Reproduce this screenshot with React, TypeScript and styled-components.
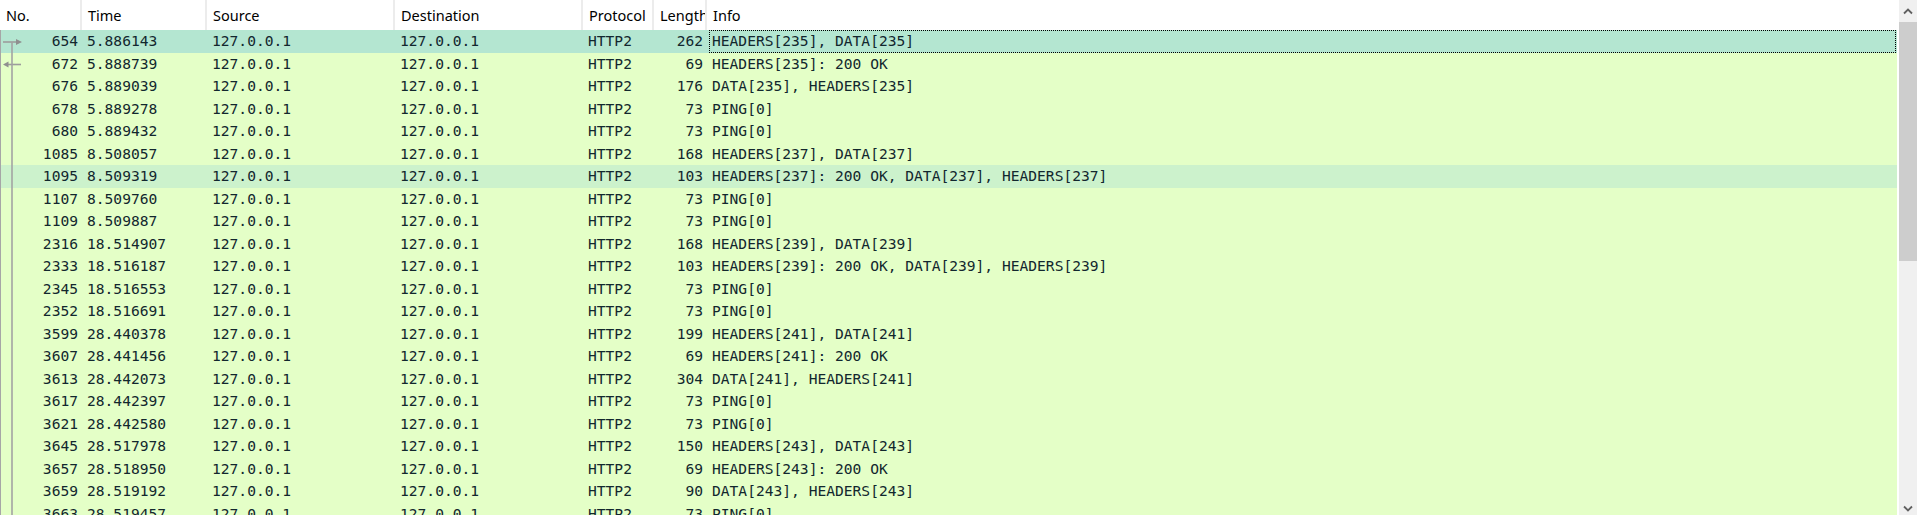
import styled, { createGlobalStyle } from 'styled-components'

type Related = 'request' | 'response' | 'line'
type RowKind = 'selected' | 'related' | 'normal'

type Packet = {
  no: number
  time: string
  len: number
  info: string
  related: Related
  kind: RowKind
}

const rawPackets: [number, string, number, string][] = [
  [654, '5.886143', 262, 'HEADERS[235], DATA[235]'],
  [672, '5.888739', 69, 'HEADERS[235]: 200 OK'],
  [676, '5.889039', 176, 'DATA[235], HEADERS[235]'],
  [678, '5.889278', 73, 'PING[0]'],
  [680, '5.889432', 73, 'PING[0]'],
  [1085, '8.508057', 168, 'HEADERS[237], DATA[237]'],
  [1095, '8.509319', 103, 'HEADERS[237]: 200 OK, DATA[237], HEADERS[237]'],
  [1107, '8.509760', 73, 'PING[0]'],
  [1109, '8.509887', 73, 'PING[0]'],
  [2316, '18.514907', 168, 'HEADERS[239], DATA[239]'],
  [2333, '18.516187', 103, 'HEADERS[239]: 200 OK, DATA[239], HEADERS[239]'],
  [2345, '18.516553', 73, 'PING[0]'],
  [2352, '18.516691', 73, 'PING[0]'],
  [3599, '28.440378', 199, 'HEADERS[241], DATA[241]'],
  [3607, '28.441456', 69, 'HEADERS[241]: 200 OK'],
  [3613, '28.442073', 304, 'DATA[241], HEADERS[241]'],
  [3617, '28.442397', 73, 'PING[0]'],
  [3621, '28.442580', 73, 'PING[0]'],
  [3645, '28.517978', 150, 'HEADERS[243], DATA[243]'],
  [3657, '28.518950', 69, 'HEADERS[243]: 200 OK'],
  [3659, '28.519192', 90, 'DATA[243], HEADERS[243]'],
  [3663, '28.519457', 73, 'PING[0]'],
]

const packets: Packet[] = rawPackets.map(([no, time, len, info], i) => ({
  no,
  time,
  len,
  info,
  related: i === 0 ? 'request' : i === 1 ? 'response' : 'line',
  kind: i === 0 ? 'selected' : no === 1095 ? 'related' : 'normal',
}))

const headers = ['No.', 'Time', 'Source', 'Destination', 'Protocol', 'Length', 'Info']

const HEADER_GRID = '82px 125px 188px 188px 71px 53px 1fr'
// the body has a 1px left border, so its first column is one pixel narrower
const BODY_GRID = '81px 125px 188px 188px 71px 53px 1fr'

const rowBg: Record<RowKind, string> = {
  selected: '#b4e6d1',
  related: '#ccf2cc',
  normal: '#e4ffc7',
}

const GlobalStyle = createGlobalStyle`
  html, body {
    margin: 0;
    padding: 0;
    background: #ffffff;
    overflow: hidden;
  }
  #root {
    height: 515px;
  }
`

const Window = styled.div`
  display: flex;
  height: 515px;
  background: #ffffff;
`

const PacketList = styled.div`
  flex: 1;
  display: flex;
  flex-direction: column;
  min-width: 0;
  overflow: hidden;
`

const HeaderRow = styled.div`
  display: grid;
  grid-template-columns: ${HEADER_GRID};
  height: 30px;
  flex-shrink: 0;
  background: #ffffff;
`

const HeaderCell = styled.div<{ $last?: boolean }>`
  box-sizing: border-box;
  display: flex;
  align-items: center;
  padding: 0 8px 1px 6px;
  overflow: hidden;
  white-space: nowrap;
  font-family: 'Noto Sans', 'Open Sans', sans-serif;
  font-size: 14.5px;
  color: #000000;
  border-right: ${(p) => (p.$last ? 'none' : '2px solid #ececec')};
`

const Body = styled.div`
  flex: 1;
  border-left: 1px solid #a6a6a6;
  background: #e4ffc7;
  overflow: hidden;
`

const Row = styled.div<{ $kind: RowKind }>`
  display: grid;
  grid-template-columns: ${BODY_GRID};
  height: 22.5px;
  background: ${(p) => rowBg[p.$kind]};
  font-family: 'DejaVu Sans Mono', 'Liberation Mono', monospace;
  font-size: 14.6px;
  color: #12272e;
`

const Cell = styled.div<{ $align?: 'left' | 'right'; $focus?: boolean }>`
  box-sizing: border-box;
  display: flex;
  align-items: center;
  justify-content: ${(p) => (p.$align === 'right' ? 'flex-end' : 'flex-start')};
  padding: 0 3px 1px ${(p) => (p.$focus ? '2px' : '4px')};
  overflow: hidden;
  white-space: nowrap;
  border: 1px ${(p) => (p.$focus ? 'dotted #000000' : 'solid transparent')};
  margin-left: ${(p) => (p.$focus ? '2px' : '0')};
  margin-right: ${(p) => (p.$focus ? '1px' : '0')};
`

const NoCell = styled.div`
  display: flex;
  align-items: center;
  justify-content: space-between;
  padding: 0 4px 1px 0;
  overflow: hidden;
`

const RelatedIcon = styled.svg`
  flex-shrink: 0;
  display: block;
  align-self: stretch;
`

const ScrollBar = styled.div`
  width: 18px;
  margin-left: 2px;
  display: flex;
  flex-direction: column;
  background: #f0f0f0;
`

const ScrollButton = styled.div<{ $down?: boolean }>`
  height: 22px;
  flex-shrink: 0;
  display: flex;
  justify-content: center;
  align-items: ${(p) => (p.$down ? 'flex-end' : 'center')};
  padding-bottom: ${(p) => (p.$down ? '3px' : '0')};
  box-sizing: border-box;
`

const Thumb = styled.div`
  height: 239px;
  flex-shrink: 0;
  background: #cdcdcd;
`

const Track = styled.div`
  flex: 1;
`

const RelatedMark = ({ kind }: { kind: Related }) => (
  <RelatedIcon width="23" height="23" viewBox="0 0 23 23" preserveAspectRatio="none">
    {kind === 'request' && (
      <>
        <line x1="2" y1="12" x2="17" y2="12" stroke="#9c9c9c" strokeWidth="1.6" />
        <path d="M15 9 L21 12 L15 15 Z" fill="#8f8f8f" />
        <line x1="11" y1="12" x2="11" y2="23" stroke="#a3a3a3" strokeWidth="1.6" />
      </>
    )}
    {kind === 'response' && (
      <>
        <line x1="5" y1="11.5" x2="20" y2="11.5" stroke="#9c9c9c" strokeWidth="1.6" />
        <path d="M7.5 8.5 L2 11.5 L7.5 14.5 Z" fill="#8f8f8f" />
        <line x1="11" y1="0" x2="11" y2="23" stroke="#a3a3a3" strokeWidth="1.6" />
      </>
    )}
    {kind === 'line' && <line x1="11" y1="0" x2="11" y2="23" stroke="#a3a3a3" strokeWidth="1.6" />}
  </RelatedIcon>
)

const Chevron = ({ down }: { down?: boolean }) => (
  <svg width="10" height="7" viewBox="0 0 10 7">
    <path
      d={down ? 'M1 1.5 L5 5.5 L9 1.5' : 'M1 5.5 L5 1.5 L9 5.5'}
      fill="none"
      stroke="#606060"
      strokeWidth="1.8"
    />
  </svg>
)

const App = () => {
  return (
    <>
      <GlobalStyle />
      <Window>
        <PacketList>
          <HeaderRow>
            {headers.map((h, i) => (
              <HeaderCell key={h} $last={i === headers.length - 1}>
                {h}
              </HeaderCell>
            ))}
          </HeaderRow>
          <Body>
            {packets.map((p) => (
              <Row key={p.no} $kind={p.kind}>
                <NoCell>
                  <RelatedMark kind={p.related} />
                  {p.no}
                </NoCell>
                <Cell>{p.time}</Cell>
                <Cell>127.0.0.1</Cell>
                <Cell>127.0.0.1</Cell>
                <Cell>HTTP2</Cell>
                <Cell $align="right">{p.len}</Cell>
                <Cell $focus={p.kind === 'selected'}>{p.info}</Cell>
              </Row>
            ))}
          </Body>
        </PacketList>
        <ScrollBar>
          <ScrollButton>
            <Chevron />
          </ScrollButton>
          <Thumb />
          <Track />
          <ScrollButton $down>
            <Chevron down />
          </ScrollButton>
        </ScrollBar>
      </Window>
    </>
  )
}

export default App
